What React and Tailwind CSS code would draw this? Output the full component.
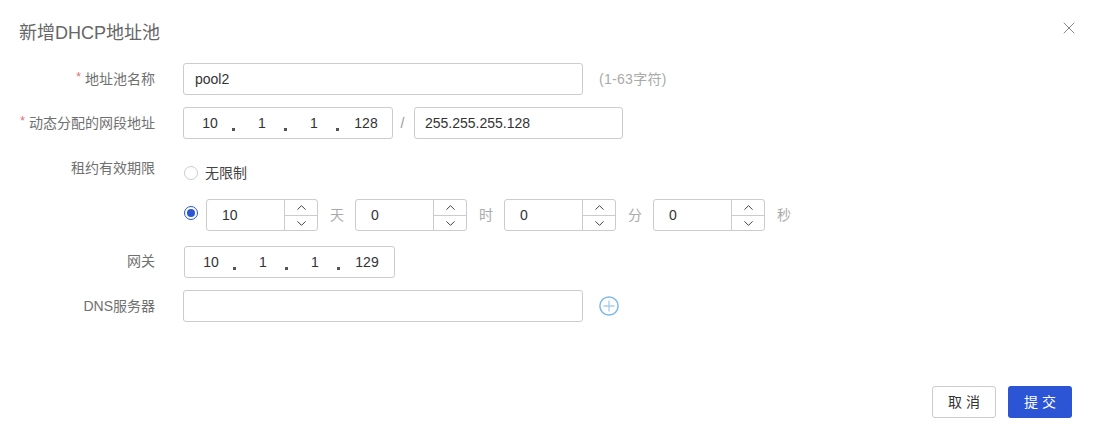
import { X, ChevronUp, ChevronDown } from 'lucide-react';

function Label({ required, children, className = '' }) {
  return (
    <div className={`w-[136px] shrink-0 whitespace-nowrap text-right text-sm text-[#707070] ${className}`}>
      {required && <span className="mr-1 text-xs text-[#e66a6a] align-[3px]">*</span>}
      {children}
    </div>
  );
}

function IpInput({ parts, className = '' }) {
  return (
    <div className={`flex h-8 items-center rounded-[3px] border border-[#ccc] text-sm text-[#333] ${className}`}>
      {parts.map((p, i) => (
        <div key={i} className="relative w-[52px] text-center">
          {p}
          {i < 3 && <span className="absolute right-px bottom-[2px] size-[3px] bg-[#555]" />}
        </div>
      ))}
    </div>
  );
}

function NumberInput({ value }) {
  return (
    <div className="flex h-8 w-28 rounded-[3px] border border-[#ccc] text-sm text-[#333]">
      <div className="flex flex-1 items-center pl-[15px]">{value}</div>
      <div className="flex w-[33px] flex-col border-l border-[#ccc] text-[#333]">
        <div className="flex flex-1 items-center justify-center border-b border-[#ccc]"><ChevronUp size={15} strokeWidth={1.5} /></div>
        <div className="flex flex-1 items-center justify-center"><ChevronDown size={15} strokeWidth={1.5} /></div>
      </div>
    </div>
  );
}

function Unit({ children }) {
  return <span className="w-[37px] pl-px text-center text-sm text-[#aaa]">{children}</span>;
}

export default function App() {
  return (
    <div className="relative h-[433px] w-[1093px] overflow-hidden bg-white font-['Liberation_Sans','Noto_Sans_CJK_SC',sans-serif]">
      <button className="absolute right-[14px] top-[18px] text-[#888]"><X size={20} strokeWidth={1.2} /></button>

      <h2 className="pl-[19px] pt-[21px] text-lg leading-6 font-normal text-[#666]">新增DHCP地址池</h2>

      <div className="mt-[18px] pl-[19px]">
        <div className="flex items-center gap-7">
          <Label required>地址池名称</Label>
          <div className="flex h-8 w-[400px] items-center rounded-[3px] border border-[#ccc] pl-[11px] text-sm text-[#333]">pool2</div>
          <span className="ml-[-12px] text-sm tracking-[0.3px] text-[#aaa]">(1-63字符)</span>
        </div>

        <div className="mt-3 flex items-center gap-7">
          <Label required>动态分配的网段地址</Label>
          <div className="flex items-center">
            <IpInput parts={['10', '1', '1', '128']} className="w-[210px]" />
            <span className="w-[21px] pr-[2px] text-center text-sm text-[#999]">/</span>
            <div className="flex h-8 w-[209px] items-center rounded-[3px] border border-[#ccc] pl-[10px] text-sm text-[#333]">255.255.255.128</div>
          </div>
        </div>

        <div className="mt-[22px] flex items-start gap-7">
          <Label className="-mt-[5px] leading-6">租约有效期限</Label>
          <div>
            <div className="flex h-6 items-center text-sm text-[#444]">
              <span className="ml-px size-[14px] rounded-full border border-[#ccc]" />
              <span className="ml-[7px]">无限制</span>
            </div>
            <div className="mt-[14px] flex items-center">
              <span className="mb-1 ml-px flex size-[14px] items-center justify-center rounded-full border border-[#2b55d4]">
                <span className="size-2 rounded-full bg-[#2b55d4]" />
              </span>
              <div className="ml-2"><NumberInput value="10" /></div>
              <Unit>天</Unit>
              <NumberInput value="0" />
              <Unit>时</Unit>
              <NumberInput value="0" />
              <Unit>分</Unit>
              <NumberInput value="0" />
              <Unit>秒</Unit>
            </div>
          </div>
        </div>

        <div className="mt-[15px] flex items-center gap-7">
          <Label className="-mt-[3px]">网关</Label>
          <IpInput parts={['10', '1', '1', '129']} className="ml-px w-[211px]" />
        </div>

        <div className="mt-3 flex items-center gap-7">
          <Label>DNS服务器</Label>
          <div className="h-8 w-[400px] rounded-[3px] border border-[#ccc]" />
          <svg className="-ml-3" width="20" height="20" viewBox="0 0 20 20" fill="none">
            <circle cx="10" cy="10" r="9.1" stroke="#7db8ee" strokeWidth="1.5" />
            <path d="M10 4.5v11M4.5 10h11" stroke="#a5cdf2" strokeWidth="1.3" />
          </svg>
        </div>
      </div>

      <div className="mt-16 flex justify-end gap-3 pr-[21px]">
        <button className="h-8 w-16 rounded-[3px] border border-[#ccc] bg-white pl-1 text-sm tracking-[4px] text-[#333]">取消</button>
        <button className="h-8 w-16 rounded-[3px] bg-[#2b55d4] pl-1 text-sm tracking-[4px] text-white">提交</button>
      </div>
    </div>
  );
}
